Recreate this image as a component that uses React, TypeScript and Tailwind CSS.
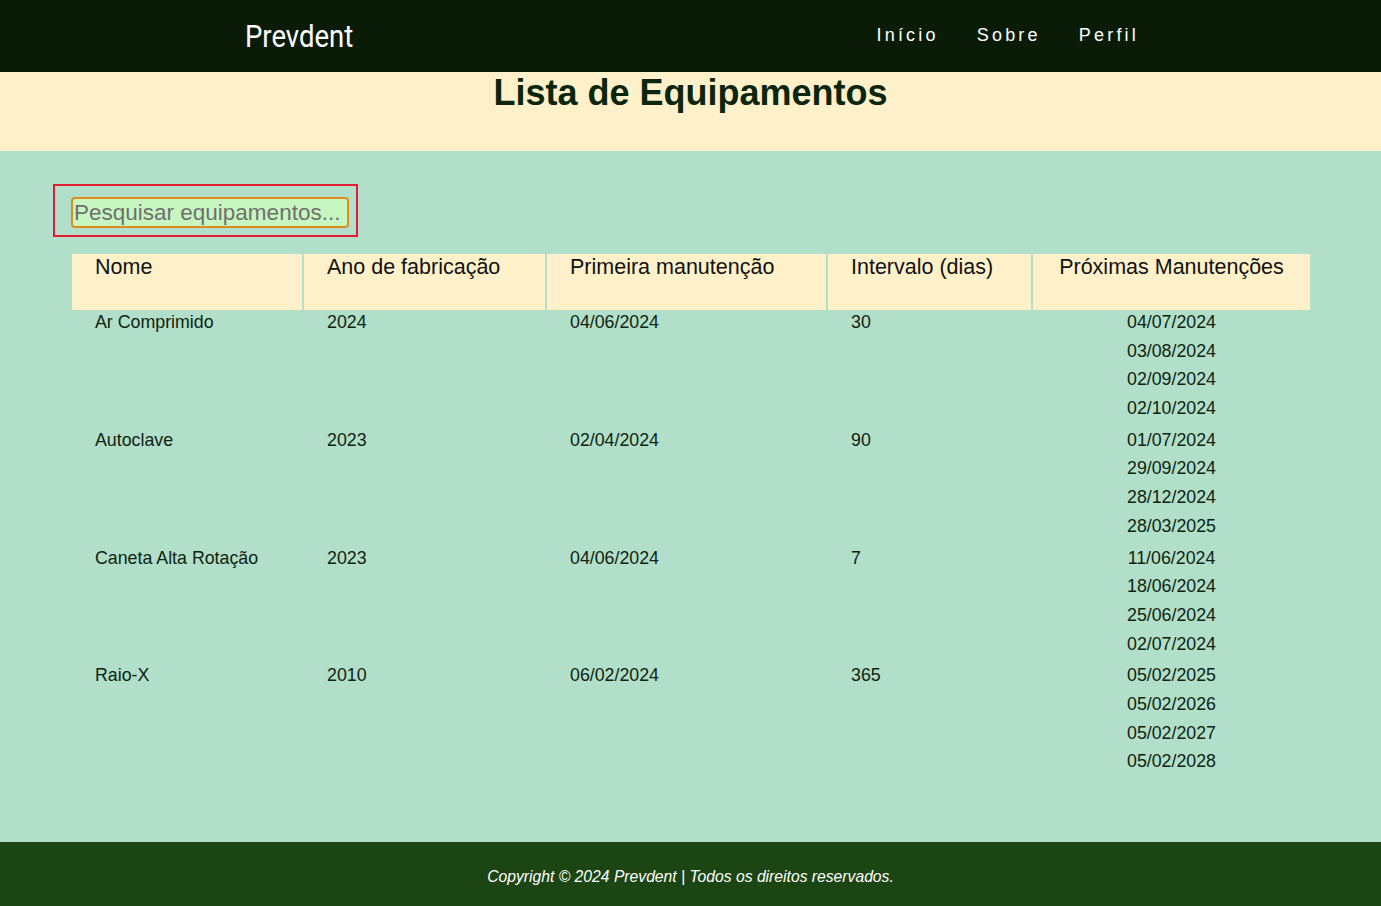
import React from "react";

const rows = [
  { nome: "Ar Comprimido", ano: "2024", primeira: "04/06/2024", intervalo: "30", prox: ["04/07/2024", "03/08/2024", "02/09/2024", "02/10/2024"] },
  { nome: "Autoclave", ano: "2023", primeira: "02/04/2024", intervalo: "90", prox: ["01/07/2024", "29/09/2024", "28/12/2024", "28/03/2025"] },
  { nome: "Caneta Alta Rotação", ano: "2023", primeira: "04/06/2024", intervalo: "7", prox: ["11/06/2024", "18/06/2024", "25/06/2024", "02/07/2024"] },
  { nome: "Raio-X", ano: "2010", primeira: "06/02/2024", intervalo: "365", prox: ["05/02/2025", "05/02/2026", "05/02/2027", "05/02/2028"] },
];

const headers = ["Nome", "Ano de fabricação", "Primeira manutenção", "Intervalo (dias)"];

export default function App() {
  return (
    <div className="min-h-[906px] flex flex-col" style={{ fontFamily: '"Liberation Sans", Arial, sans-serif' }}>
      <nav className="h-[72px] bg-[#0a1c08] flex items-center justify-between pl-[245px] pr-[242px]">
        <span
          className="inline-block text-[32px] leading-none text-white origin-left scale-x-[0.86] -mt-[1px]"
          style={{ fontFamily: 'Roboto, "Liberation Sans", sans-serif' }}
        >
          Prevdent
        </span>
        <div className="flex gap-[38px] text-[18px] tracking-[3.2px] text-white -mt-[2px]">
          <span>Início</span>
          <span>Sobre</span>
          <span>Perfil</span>
        </div>
      </nav>

      <header className="h-[79px] bg-[#fef1c9]">
        <h1 className="text-center text-[36px] font-bold leading-[41px] text-[#0b260c]">Lista de Equipamentos</h1>
      </header>

      <main className="flex-1 bg-[#b2dfc9] pt-[33px] pl-[53px] pb-[60px]">
        <div className="w-[305px] h-[53px] border-2 border-[#e31a32] pl-[16px] pt-[11px]">
          <input
            placeholder="Pesquisar equipamentos..."
            className="w-[278px] h-[31px] bg-[#c7f6c1] border-2 border-[#e08b1d] rounded-[4px] px-[1px] text-[22.5px] leading-none placeholder:text-[#6f6f6f] outline-none"
          />
        </div>

        <div className="ml-[19px] mt-[17px] grid grid-cols-[230px_241px_279px_203px_277px] gap-x-[2px] gap-y-[3px] text-[#0e2410]">
          {headers.map((h) => (
            <div key={h} className="h-[56px] bg-[#fef1c9] pl-[23px] pt-[1px] text-[21.5px] leading-[24px] text-[#111]">
              {h}
            </div>
          ))}
          <div className="h-[56px] bg-[#fef1c9] text-center pt-[1px] text-[21.5px] leading-[24px] text-[#111]">
            Próximas Manutenções
          </div>

          {rows.map((r) => (
            <React.Fragment key={r.nome}>
              <div className="pl-[23px] text-[17.8px] leading-[19px]">{r.nome}</div>
              <div className="pl-[23px] text-[17.8px] leading-[19px]">{r.ano}</div>
              <div className="pl-[23px] text-[17.8px] leading-[19px]">{r.primeira}</div>
              <div className="pl-[23px] text-[17.8px] leading-[19px]">{r.intervalo}</div>
              <div className="text-center text-[17.8px] leading-[19px]">
                {r.prox.map((d) => (
                  <div key={d} className="h-[28.7px]">{d}</div>
                ))}
              </div>
            </React.Fragment>
          ))}
        </div>
      </main>

      <footer className="h-[64px] bg-[#1b4613] flex items-center justify-center pt-[5px] text-white italic text-[15.7px]">
        Copyright © 2024 Prevdent | Todos os direitos reservados.
      </footer>
    </div>
  );
}
